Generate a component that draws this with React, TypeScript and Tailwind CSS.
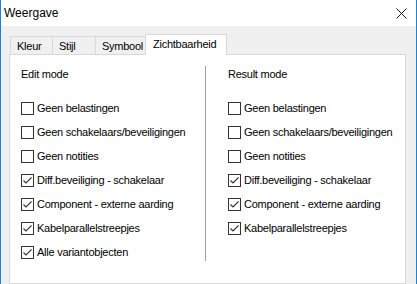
import React from 'react';

const font = { fontFamily: '"Liberation Sans", Arial, sans-serif' };

const items = [
    { label: 'Geen belastingen', edit: false, result: false },
    { label: 'Geen schakelaars/beveiligingen', edit: false, result: false },
    { label: 'Geen notities', edit: false, result: false },
    { label: 'Diff.beveiliging - schakelaar', edit: true, result: true },
    { label: 'Component - externe aarding', edit: true, result: true },
    { label: 'Kabelparallelstreepjes', edit: true, result: true },
];

const txt = 'text-[11px] leading-[16px] tracking-[-0.25px] text-black whitespace-nowrap';

function Checkbox({ label, checked }: { label: string; checked: boolean }) {
    return (
        <div className="flex h-[24px] items-center gap-[3px]">
            <div className="flex h-[13px] w-[13px] flex-none items-center justify-center border border-[#333333] bg-white">
                {checked && (
                    <svg width="11" height="11" viewBox="0 0 11 11">
                        <path d="M1.5 5.5 L4 8 L9.5 2.5" fill="none" stroke="#333333" strokeWidth="1.1" />
                    </svg>
                )}
            </div>
            <span className={txt}>{label}</span>
        </div>
    );
}

function Column({ title, mode }: { title: string; mode: 'edit' | 'result' }) {
    const rows = mode === 'edit'
        ? [...items.map(i => ({ label: i.label, checked: i.edit })), { label: 'Alle variantobjecten', checked: true }]
        : items.map(i => ({ label: i.label, checked: i.result }));
    return (
        <div className="flex flex-col">
            <div className={txt}>{title}</div>
            <div className="mt-[14px] flex flex-col">
                {rows.map(r => (
                    <Checkbox key={r.label} label={r.label} checked={r.checked} />
                ))}
            </div>
        </div>
    );
}

export default function App() {
    const tabs = [
        { label: 'Kleur', w: 'w-[43px]' },
        { label: 'Stijl', w: 'w-[44px]' },
        { label: 'Symbool', w: 'w-[51px]' },
    ];
    return (
        <div style={font} className="flex h-[284px] w-[417px] flex-col overflow-hidden border-x border-[#1883d7] bg-[#f0f0f0]">
            {/* title bar */}
            <div className="flex h-[26px] flex-none items-center justify-between bg-white pl-[3px] pr-[9px]">
                <span className="text-[12px] leading-[16px] text-black">Weergave</span>
                <svg width="11" height="11" viewBox="0 0 11 11">
                    <path d="M0.5 0.5 L10.5 10.5 M10.5 0.5 L0.5 10.5" stroke="#111111" strokeWidth="1" />
                </svg>
            </div>

            <div className="flex flex-1 flex-col pl-[8px] pr-[10px] pt-[8px]">
                {/* tabs */}
                <div className="flex h-[20px] items-end pl-[1px]">
                    {tabs.map(t => (
                        <div
                            key={t.label}
                            className={`${t.w} -mr-px flex h-[18px] flex-none items-center border border-b-0 border-[#d9d9d9] bg-[#f0f0f0] pl-[6px] ${txt}`}
                        >
                            {t.label}
                        </div>
                    ))}
                    <div className={`relative z-10 -mb-px flex h-[21px] w-[82px] flex-none items-center border border-b-0 border-[#d9d9d9] bg-white pb-[2px] pl-[7px] ${txt}`}>
                        Zichtbaarheid
                    </div>
                </div>

                {/* tab panel */}
                <div className="flex flex-1 border border-[#d9d9d9] bg-white pl-[11px] pt-[11px]">
                    <div className="w-[184px] flex-none">
                        <Column title="Edit mode" mode="edit" />
                    </div>
                    <div className="h-[195px] w-px flex-none bg-[#a0a0a0]" />
                    <div className="pl-[22px]">
                        <Column title="Result mode" mode="result" />
                    </div>
                </div>
            </div>
        </div>
    );
}
